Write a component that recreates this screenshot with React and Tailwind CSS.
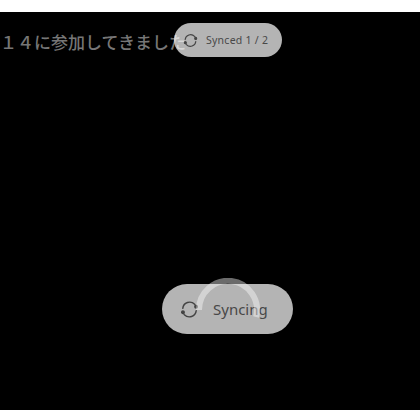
import React from "react";

function SyncIcon({ size, stroke }) {
  return (
    <svg width={size} height={size} viewBox="0 0 24 24" fill="none" stroke="#444444" strokeWidth={stroke} strokeLinecap="round">
      <path d="M3.5 10.5A8.7 8.7 0 0 1 18.5 5.5L20.5 8" />
      <path d="M20.5 13.5A8.7 8.7 0 0 1 5.5 18.5L3.5 16" />
      <circle cx="20.3" cy="8.6" r="1.6" fill="#444444" />
      <circle cx="3.7" cy="15.4" r="1.6" fill="#444444" />
    </svg>
  );
}

export default function App() {
  return (
    <div className="relative w-[420px] h-[410px] overflow-hidden bg-white font-['Noto_Sans',_'Noto_Sans_CJK_JP',_sans-serif]">
      <div className="relative h-[398px] mt-[12px] bg-black overflow-hidden">
        <p className="whitespace-nowrap pt-[18px] text-[17px] leading-[24px] font-medium text-[#767676] font-['Noto_Sans_CJK_JP',_sans-serif]">１４に参加してきました</p>

        <div className="absolute left-[174px] top-[11px] w-[108px] h-[34px] rounded-full bg-[#ffffffb4] flex items-center pl-[9px] gap-[8px]">
          <SyncIcon size={15} stroke={1.8} />
          <span className="text-[10.5px] text-[#484848] tracking-[0.25px] leading-none">Synced 1 / 2</span>
        </div>

        <div className="absolute left-[162px] top-[272px] w-[131px] h-[50px] rounded-full bg-[#ffffffb4] flex items-center pl-[18px] gap-[14px]">
          <SyncIcon size={19} stroke={1.8} />
          <span className="text-[15px] text-[#484848] leading-none">Syncing</span>
        </div>
        <svg className="absolute left-[196px] top-[266px]" width="64" height="64" viewBox="0 0 64 64" fill="none">
          <path d="M3 32A29 29 0 1 1 60.1 39" stroke="#ffffff" strokeOpacity="0.42" strokeWidth="6" />
        </svg>
      </div>
    </div>
  );
}
